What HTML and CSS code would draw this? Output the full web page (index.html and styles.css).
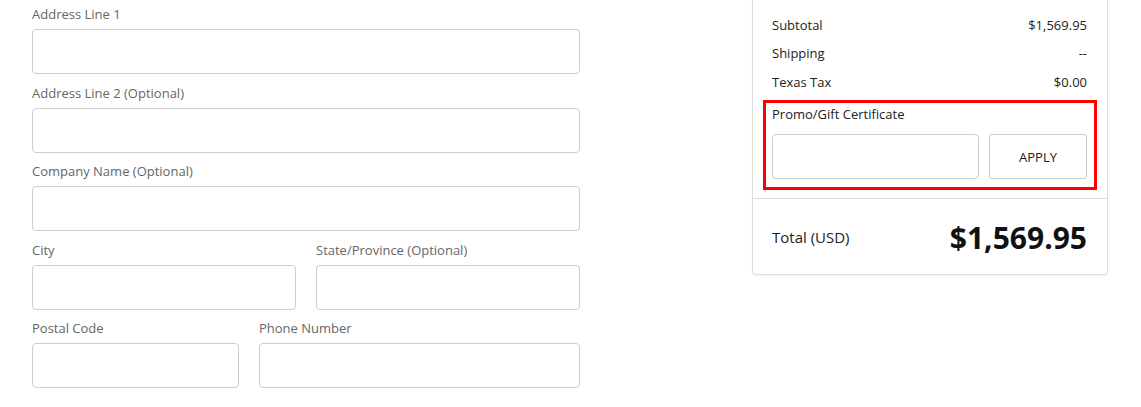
FILE: index.html
```html
<!DOCTYPE html>
<html lang="en">
<head>
    <meta charset="UTF-8">
    <meta name="viewport" content="width=device-width, initial-scale=1.0">
    <title>Checkout</title>
    <link rel="stylesheet" href="styles.css">
</head>
<body>
    <div class="checkout">
        <form class="address-form">
            <div class="field">
                <label for="address1">Address Line 1</label>
                <input type="text" id="address1">
            </div>
            <div class="field">
                <label for="address2">Address Line 2 (Optional)</label>
                <input type="text" id="address2">
            </div>
            <div class="field">
                <label for="company">Company Name (Optional)</label>
                <input type="text" id="company">
            </div>
            <div class="field-row">
                <div class="field">
                    <label for="city">City</label>
                    <input type="text" id="city">
                </div>
                <div class="field">
                    <label for="state">State/Province (Optional)</label>
                    <input type="text" id="state">
                </div>
            </div>
            <div class="field-row postal-row">
                <div class="field">
                    <label for="postal">Postal Code</label>
                    <input type="text" id="postal">
                </div>
                <div class="field">
                    <label for="phone">Phone Number</label>
                    <input type="text" id="phone">
                </div>
            </div>
        </form>

        <div class="summary">
            <div class="summary-body">
                <div class="summary-line"><span>Subtotal</span><span>$1,569.95</span></div>
                <div class="summary-line"><span>Shipping</span><span>--</span></div>
                <div class="summary-line"><span>Texas Tax</span><span>$0.00</span></div>
                <div class="promo">
                    <label for="promo-code">Promo/Gift Certificate</label>
                    <div class="promo-controls">
                        <input type="text" id="promo-code">
                        <button type="button">APPLY</button>
                    </div>
                </div>
            </div>
            <div class="summary-total">
                <span>Total (USD)</span>
                <span class="total-amount">$1,569.95</span>
            </div>
        </div>
    </div>
</body>
</html>
```

FILE: styles.css
```css
body {
    margin: 0;
    font-family: "Open Sans", Arial, sans-serif;
    background: #fff;
    color: #222;
}
.checkout {
    display: flex;
    align-items: flex-start;
    padding-left: 32px;
}
.address-form {
    width: 548px;
    padding-top: 4px;
}
.field {
    display: flex;
    flex-direction: column;
    margin-bottom: 8.5px;
}
.field label {
    font-size: 13px;
    line-height: 20px;
    color: #666;
    margin-bottom: 5px;
}
.field input,
.promo input {
    box-sizing: border-box;
    height: 45px;
    border: 1px solid #ccc;
    border-radius: 4px;
    padding: 0 10px;
    font: inherit;
    background: #fff;
}
.field-row {
    display: grid;
    grid-template-columns: 1fr 1fr;
    gap: 20px;
}
.postal-row {
    grid-template-columns: 207px 1fr;
}
.summary {
    box-sizing: border-box;
    width: 356px;
    margin-left: 172px;
    margin-top: -10px;
    border: 1px solid #ddd;
    border-radius: 0 0 4px 4px;
    box-shadow: 0 1px 2px rgba(0, 0, 0, 0.06);
}
.summary-body {
    padding: 19.75px 20px 8px 19px;
    border-bottom: 1px solid #ddd;
}
.summary-line {
    display: flex;
    justify-content: space-between;
    font-size: 13px;
    height: 28.5px;
    line-height: 28.5px;
}
.promo {
    margin: 3.75px -10px 0 -9px;
    padding: 1px 7px 8px 6px;
    border: 3px solid #f00;
}
.promo label {
    display: block;
    font-size: 13px;
    line-height: 20px;
    margin-bottom: 10px;
}
.promo-controls {
    display: flex;
    gap: 10px;
}
.promo input {
    flex: 1;
    min-width: 0;
}
.promo button {
    flex: none;
    width: 98px;
    height: 45px;
    border: 1px solid #ccc;
    border-radius: 3px;
    background: #fff;
    font-family: inherit;
    font-size: 13px;
    color: #222;
    padding-top: 2px;
}
.summary-total {
    display: flex;
    justify-content: space-between;
    align-items: center;
    height: 74px;
    padding: 1px 20px 0 19px;
    font-size: 15px;
}
.total-amount {
    font-size: 30px;
    font-weight: 700;
    color: #111;
}
```
